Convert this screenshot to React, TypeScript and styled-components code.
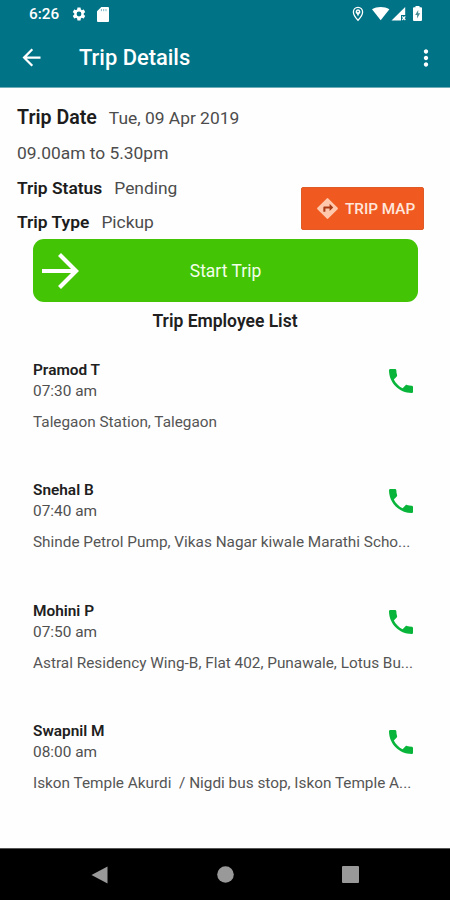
import React from 'react';
import styled, { createGlobalStyle } from 'styled-components';

const GlobalStyle = createGlobalStyle`
  * { box-sizing: border-box; }
  body { margin: 0; background: #fff; font-family: Roboto, "Liberation Sans", sans-serif; }
  button { font: inherit; border: 0; margin: 0; padding: 0; background: none; }
`;

const Screen = styled.div`
  width: 450px;
  height: 900px;
  display: flex;
  flex-direction: column;
  overflow: hidden;
  background: #fefefe;
`;

const Header = styled.header`
  height: 88px;
  flex: none;
  background: #007386;
  border-bottom: 1px solid #6fadb8;
  color: #fff;
`;

const StatusBar = styled.div`
  height: 28px;
  padding: 0 27px 0 29px;
  display: flex;
  align-items: center;
  justify-content: space-between;
`;

const StatusGroup = styled.div<{ $gap: number }>`
  display: flex;
  align-items: center;
  gap: ${p => p.$gap}px;
  svg { display: block; }
`;

const Clock = styled.span`
  font-size: 15.3px;
  font-weight: 500;
  line-height: 28px;
  margin-right: 2px;
`;

const AppBar = styled.div`
  height: 59px;
  padding: 0 11px 0 18px;
  display: flex;
  align-items: center;
`;

const IconButton = styled.button`
  display: flex;
  color: inherit;
`;

const Title = styled.h1`
  flex: 1;
  margin: 0 0 0 34px;
  font-size: 21.9px;
  font-weight: 500;
  line-height: 28px;
`;

const Details = styled.section`
  height: 151px;
  flex: none;
  padding: 13px 26px 0 17px;
  display: grid;
  grid-template-columns: 1fr 123px;
`;

const Facts = styled.div`
  display: flex;
  flex-direction: column;
`;

const Fact = styled.div`
  height: 34.8px;
  display: flex;
  align-items: center;
  line-height: 34.8px;
  white-space: nowrap;
`;

const Label = styled.span<{ $large?: boolean }>`
  font-size: ${p => (p.$large ? 19.6 : 17.4)}px;
  font-weight: 600;
  color: #1c1c1c;
  margin-right: 12px;
`;

const Value = styled.span`
  font-size: 17.4px;
  color: #4c4c4c;
`;

const MapButton = styled.button`
  width: 123px;
  height: 43px;
  margin-top: 86px;
  padding-left: 13px;
  display: flex;
  align-items: center;
  gap: 5px;
  border: 1px solid #df5a24;
  border-radius: 2px;
  background: #f05a20;
  color: #ffe6dc;
  font-size: 15.3px;
  font-weight: 500;
  white-space: nowrap;
  svg { flex: none; }
`;

const StartButton = styled.button`
  height: 63px;
  flex: none;
  margin: 0 32px 0 33px;
  padding: 0 5px;
  display: grid;
  grid-template-columns: 44px 1fr 44px;
  align-items: center;
  border-radius: 11px;
  background: #43c405;
  color: #f2ffe9;
  font-size: 17.5px;
`;

const ListTitle = styled.h2`
  height: 38px;
  flex: none;
  margin: 0;
  font-size: 17.5px;
  line-height: 38px;
  font-weight: 600;
  color: #202020;
  text-align: center;
`;

const List = styled.ul`
  flex: 1;
  min-height: 0;
  margin: 0;
  padding: 20px 33px 0;
  list-style: none;
`;

const Row = styled.li`
  height: 120.3px;
  display: grid;
  grid-template-columns: 1fr 32px;
  grid-template-rows: 42px 42px;
`;

const Person = styled.div`
  display: flex;
  flex-direction: column;
  font-size: 15.4px;
  line-height: 21px;
`;

const Name = styled.span`
  font-weight: 600;
  color: #202020;
`;

const Time = styled.span`
  color: #505050;
`;

const CallButton = styled.button`
  display: flex;
  align-items: center;
  color: #08b53a;
`;

const Address = styled.div`
  grid-column: 1 / -1;
  white-space: pre;
  font-size: 15.33px;
  line-height: 41px;
  color: #555;
`;

const NavBar = styled.nav`
  height: 52px;
  flex: none;
  padding: 0 91px;
  border-top: 1px solid #555;
  display: flex;
  align-items: center;
  justify-content: space-between;
  background: #000;
  color: #999;
  svg { display: block; }
`;

const facts = [
  { label: 'Trip Date', value: 'Tue, 09 Apr 2019', large: true },
  { value: '09.00am to 5.30pm' },
  { label: 'Trip Status', value: 'Pending' },
  { label: 'Trip Type', value: 'Pickup' },
];

const employees = [
  { name: 'Pramod T', time: '07:30 am', address: 'Talegaon Station, Talegaon' },
  { name: 'Snehal B', time: '07:40 am', address: 'Shinde Petrol Pump, Vikas Nagar kiwale Marathi Scho...' },
  { name: 'Mohini P', time: '07:50 am', address: 'Astral Residency Wing-B, Flat 402, Punawale, Lotus Bu...' },
  { name: 'Swapnil M', time: '08:00 am', address: 'Iskon Temple Akurdi  / Nigdi bus stop, Iskon Temple A...' },
];

const Glyph = ({ d, size }: { d: string; size: number }) => (
  <svg width={size} height={size} viewBox="0 0 24 24" fill="currentColor" fillRule="evenodd">
    <path d={d} />
  </svg>
);

const GEAR = 'M19.14 12.94c.04-.3.06-.61.06-.94 0-.32-.02-.64-.07-.94l2.03-1.58a.49.49 0 0 0 .12-.61l-1.92-3.32a.488.488 0 0 0-.59-.22l-2.39.96c-.5-.38-1.03-.7-1.62-.94l-.36-2.54a.484.484 0 0 0-.48-.41h-3.84c-.24 0-.43.17-.47.41l-.36 2.54c-.59.24-1.13.57-1.62.94l-2.39-.96c-.22-.08-.47 0-.59.22L2.74 8.87c-.12.21-.08.47.12.61l2.03 1.58c-.05.3-.09.63-.09.94s.02.64.07.94l-2.03 1.58a.49.49 0 0 0-.12.61l1.92 3.32c.12.22.37.29.59.22l2.39-.96c.5.38 1.03.7 1.62.94l.36 2.54c.05.24.24.41.48.41h3.84c.24 0 .44-.17.47-.41l.36-2.54c.59-.24 1.13-.56 1.62-.94l2.39.96c.22.08.47 0 .59-.22l1.92-3.32c.12-.22.07-.47-.12-.61l-2.01-1.58zM12 15.6A3.6 3.6 0 1 1 12 8.4a3.6 3.6 0 0 1 0 7.2z';
const BACK = 'M20 11H7.83l5.59-5.59L12 4l-8 8 8 8 1.41-1.41L7.83 13H20v-2z';
const MORE = 'M12 8c1.1 0 2-.9 2-2s-.9-2-2-2-2 .9-2 2 .9 2 2 2zm0 2c-1.1 0-2 .9-2 2s.9 2 2 2 2-.9 2-2-.9-2-2-2zm0 6c-1.1 0-2 .9-2 2s.9 2 2 2 2-.9 2-2-.9-2-2-2z';
const PHONE = 'M6.62 10.79c1.44 2.83 3.76 5.14 6.59 6.59l2.2-2.2c.27-.27.67-.36 1.02-.24 1.12.37 2.33.57 3.57.57.55 0 1 .45 1 1V20c0 .55-.45 1-1 1-9.39 0-17-7.61-17-17 0-.55.45-1 1-1h3.5c.55 0 1 .45 1 1 0 1.25.2 2.45.57 3.57.11.35.03.74-.25 1.02l-2.2 2.2z';
const DIRECTIONS = 'M21.71 11.29l-9-9a.996.996 0 0 0-1.41 0l-9 9a.996.996 0 0 0 0 1.41l9 9c.39.39 1.02.39 1.41 0l9-9a.996.996 0 0 0 0-1.41zM14 14.5V12h-4v3H8v-4c0-.55.45-1 1-1h5V7.5l3.5 3.5-3.5 3.5z';

export default function App() {
  return (
    <Screen>
      <GlobalStyle />
      <Header>
        <StatusBar>
          <StatusGroup $gap={10}>
            <Clock>6:26</Clock>
            <Glyph d={GEAR} size={16} />
            <svg width="12" height="15" viewBox="0 0 12 15" fill="currentColor">
              <path d="M4.3 0H11a1 1 0 0 1 1 1v13a1 1 0 0 1-1 1H1a1 1 0 0 1-1-1V4.3z" />
              <path d="M4.4 2v2.2M6.7 2v2.2M9 2v2.2" stroke="#007386" strokeWidth=".5" />
            </svg>
          </StatusGroup>
          <StatusGroup $gap={0}>
            <svg width="73" height="16" viewBox="0 0 73 16" fill="currentColor">
              <path d="M8 1.3c-2.7 0-4.6 2-4.6 4.6C3.4 9.2 8 14.3 8 14.3s4.600-5.100 4.600-8.400c0-2.600-1.900-4.600-4.600-4.600z" fill="none" stroke="currentColor" strokeWidth="1.3" />
              <path d="M8 3.2a2.500 2.500 0 0 0-1.100 4.700L8 10.500l1.100-2.600A2.500 2.500 0 0 0 8 3.200z" />
              <circle cx="8" cy="5.6" r=".8" fill="#007386" />
              <path d="M22 3.300C27 .1 34.400.1 39.400 3.300L30.700 14.300z" />
              <path d="M55.200 1v8H51v5.500H41.500z" />
              <path d="M52.300 10.300l3 3.700m0-3.700l-3 3.700" stroke="currentColor" strokeWidth="1.2" />
              <path d="M65.500 1.300V0h4v1.300H71a1 1 0 0 1 1 1V14a1 1 0 0 1-1 1h-7a1 1 0 0 1-1-1V2.300a1 1 0 0 1 1-1z" />
              <path d="M68.200 4l-3 5h1.900v3.500l3-5.200h-1.900z" fill="#4c8d95" />
            </svg>
          </StatusGroup>
        </StatusBar>
        <AppBar>
          <IconButton aria-label="Back"><Glyph d={BACK} size={27} /></IconButton>
          <Title>Trip Details</Title>
          <IconButton aria-label="More options"><Glyph d={MORE} size={26} /></IconButton>
        </AppBar>
      </Header>

      <Details>
        <Facts>
          {facts.map(f => (
            <Fact key={f.value}>
              {f.label && <Label $large={f.large}>{f.label}</Label>}
              <Value>{f.value}</Value>
            </Fact>
          ))}
        </Facts>
        <MapButton>
          <svg width="25" height="25" viewBox="0 0 24 24" fill="none">
            <path d="M12 3l9 9-9 9-9-9z" fill="#a83a14" />
            <path d={DIRECTIONS} fill="#ffc8ad" />
          </svg>
          TRIP MAP
        </MapButton>
      </Details>

      <StartButton>
        <svg width="44" height="44" viewBox="0 0 44 44" fill="none" stroke="#fff" strokeWidth="4.2">
          <path d="M4 22h34M21.500 5.500L38 22 21.500 38.500" />
        </svg>
        <span>Start Trip</span>
      </StartButton>

      <ListTitle>Trip Employee List</ListTitle>
      <List>
        {employees.map(e => (
          <Row key={e.name}>
            <Person>
              <Name>{e.name}</Name>
              <Time>{e.time}</Time>
            </Person>
            <CallButton aria-label={`Call ${e.name}`}><Glyph d={PHONE} size={32} /></CallButton>
            <Address>{e.address}</Address>
          </Row>
        ))}
      </List>

      <NavBar>
        <svg width="17" height="18" viewBox="0 0 17 18" fill="currentColor"><path d="M16.500.5v17L.5 9z" /></svg>
        <svg width="17" height="17" viewBox="0 0 17 17" fill="currentColor"><circle cx="8.5" cy="8.5" r="8.3" /></svg>
        <svg width="17" height="17" viewBox="0 0 17 17" fill="currentColor"><rect width="17" height="17" rx="1" /></svg>
      </NavBar>
    </Screen>
  );
}
